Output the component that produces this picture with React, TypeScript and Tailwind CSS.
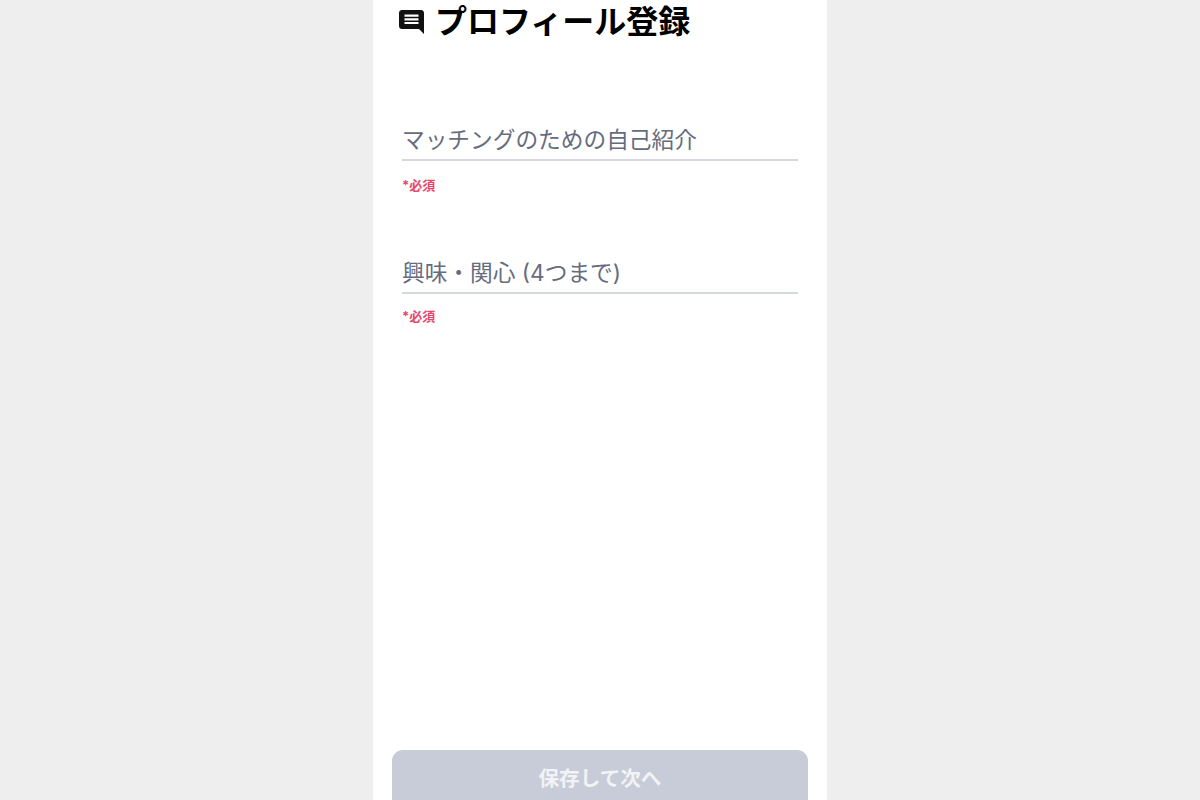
const font = "font-['Inter','Noto_Sans_CJK_JP',sans-serif]";

const fields = [
  { label: "マッチングのための自己紹介", noteClass: "mt-[15px]" },
  { label: "興味・関心 (4つまで)", noteClass: "mt-[13px]" },
];

const App = () => {
  return (
    <div className={`flex justify-center h-[800px] overflow-hidden bg-[#eeeeee] ${font}`}>
      <div className="flex flex-col w-[454px] h-[800px] bg-white">
        <div className="flex items-center h-[44px] pl-[26px]">
          <svg viewBox="0 0 25 24" className="w-[25px] h-[24px] fill-[#111111]">
            <path d="M3 0H22C23.7 0 25 1.3 25 3V24L20 19H3C1.3 19 0 17.7 0 16V3C0 1.3 1.3 0 3 0Z" />
            <path className="fill-white" d="M5.5 4.5H19.5V6.7H5.5ZM5.5 8.2H19.5V10.4H5.5ZM5.5 11.9H19.5V14.1H5.5Z" />
          </svg>
          <h1 className="ml-[11px] text-[32px] leading-[44px] font-bold text-black whitespace-nowrap">
            プロフィール登録
          </h1>
        </div>

        <div className="flex flex-col gap-[60px] mt-[78px] px-[29px]">
          {fields.map((field) => (
            <div key={field.label} className="h-[73px]">
              <div className="h-[39px] border-b-2 border-[#d6d8e0] text-[22.7px] leading-[36px] text-[#666c7e] whitespace-nowrap">
                {field.label}
              </div>
              <p className={`${field.noteClass} text-[13px] leading-[18px] font-bold text-[#e8476a]`}>*必須</p>
            </div>
          ))}
        </div>

        <div className="mt-auto px-[19px]">
          <button className="flex justify-center w-full h-[50px] pt-[14px] rounded-t-[11px] bg-[#c8ccd8] text-[20.6px] leading-[29px] font-semibold text-[#f2f3f6]">
            保存して次へ
          </button>
        </div>
      </div>
    </div>
  );
};

export default App;
